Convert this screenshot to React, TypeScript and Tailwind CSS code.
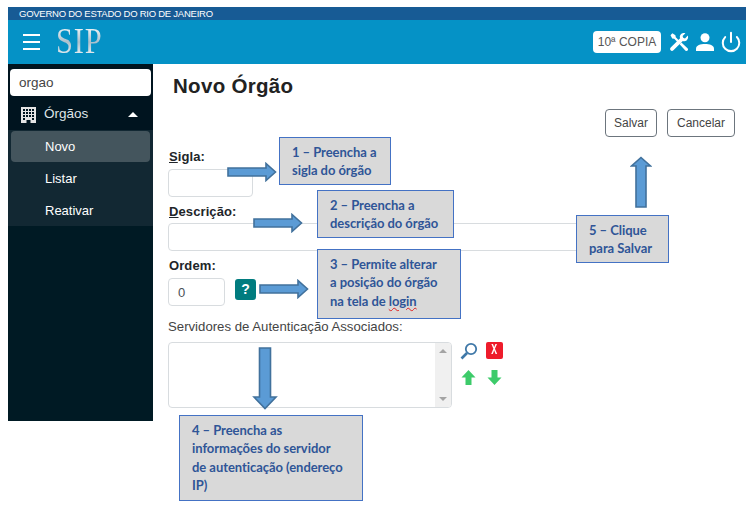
import React from "react";
import { Power } from "lucide-react";

const Note = ({ className, children }: { className: string; children: React.ReactNode }) => (
  <div className={`absolute bg-[#d9d9d9] border border-[#4472c4] text-[#2f5597] font-bold text-[13px] leading-[18.3px] tracking-[-0.05px] font-['Lato',sans-serif] ${className}`}>
    {children}
  </div>
);

const ArrowRight = ({ className }: { className: string }) => (
  <svg className={`absolute ${className}`} width="50" height="20" viewBox="0 0 50 20">
    <path d="M1 6H39V1.5L48.5 10L39 18.5V14H1Z" fill="#5b9bd5" stroke="#41719c" strokeWidth="1.6" />
  </svg>
);

const Field = ({ className }: { className: string }) => (
  <div className={`border border-[#d8dcdf] rounded bg-white ${className}`} />
);

export default function App() {
  return (
    <div className="relative w-[753px] h-[513px] overflow-hidden bg-white pl-2 pt-[7px] font-['Liberation_Sans',Arial,sans-serif]">
      <div className="w-[738px]">
        <div className="h-[13px] bg-[#175b95] pl-[11px] text-[9.5px] leading-[13px] text-white tracking-[-0.25px]">GOVERNO DO ESTADO DO RIO DE JANEIRO</div>
        <div className="h-[44px] bg-[#0592c6] flex items-center pl-[15px] pr-[4px]">
          <div className="flex flex-col gap-[5px] w-[17px]">
            <div className="h-[2px] bg-white" />
            <div className="h-[2px] bg-white" />
            <div className="h-[2px] bg-white" />
          </div>
          <div className="ml-[16px] h-[34px] text-[35px] leading-[34px] font-['Liberation_Serif',serif] tracking-[1px] bg-gradient-to-b from-[#ffffff] via-[#a9bfcb] to-[#ffffff] bg-clip-text text-transparent scale-x-[0.87] origin-left">SIP</div>
          <div className="ml-auto h-[22px] w-[68px] rounded bg-white text-[#555] text-[12px] flex items-center justify-center">10ª COPIA</div>
          <svg className="ml-[8px]" width="20" height="20" viewBox="0 0 20 20" fill="white">
            <path d="M1.5 3.2L3.4 1.3L6.4 3.2L6.8 5.2L11 9.4L9.4 11L5.2 6.8L3.2 6.4Z" />
            <path d="M10.6 12.2L12.4 10.4L18.5 16.3C19.2 17 19.2 18 18.6 18.6C18 19.2 17 19.2 16.3 18.5Z" />
            <path d="M18.8 3.6C19.5 5.4 19 7.3 17.6 8.4C16.4 9.3 15 9.4 13.8 8.9L4.4 18.3C3.6 19.1 2.4 19.1 1.6 18.3C0.9 17.5 0.9 16.4 1.7 15.6L11.1 6.2C10.6 5 10.7 3.5 11.7 2.4C12.8 1 14.7 0.5 16.4 1.2L13.6 4L14.2 5.8L16 6.4Z" />
          </svg>
          <svg className="ml-[7px]" width="18" height="18" viewBox="0 0 18 18" fill="white">
            <circle cx="9" cy="4.8" r="4.5" />
            <path d="M0 18V15.5C0 12.4 4.5 11 9 11C13.5 11 18 12.4 18 15.5V18Z" />
          </svg>
          <Power className="ml-[6px] text-white" size={22} strokeWidth={2.2} />
        </div>
      </div>

      <div className="flex w-[738px]">
        <aside className="w-[145px] h-[357px] shrink-0 bg-[#001a24] text-white text-[13px]">
          <div className="bg-[#00141f] pt-[5px] px-[2px] h-[66px]">
            <div className="h-[27px] rounded bg-white text-[#444] pl-[9px] leading-[27px] text-[13.5px]">orgao</div>
            <div className="flex items-center h-[36px] pt-px pl-[11px] pr-[13px] text-[#dfe5e8] text-[13.5px]">
              <svg width="15" height="16" viewBox="0 0 15 16" fill="#e4e4e4">
                <path fillRule="evenodd" d="M0 0H15V16H9.5V13H5.5V16H0ZM2 2V4H4V2ZM5 2V4H7V2ZM8 2V4H10V2ZM11 2V4H13V2ZM2 5V7H4V5ZM5 5V7H7V5ZM8 5V7H10V5ZM11 5V7H13V5ZM2 8V10H4V8ZM5 8V10H7V8ZM8 8V10H10V8ZM11 8V10H13V8ZM2 11V13H4V11ZM11 11V13H13V11Z" />
              </svg>
              <span className="ml-[8px]">Órgãos</span>
              <span className="ml-auto w-0 h-0 border-x-[5px] border-x-transparent border-b-[5px] border-b-white" />
            </div>
          </div>
          <div className="bg-[#122833] h-[96px] pt-px px-[3px] font-normal">
            <div className="h-[31px] rounded bg-[#44555d] pl-[34px] leading-[31px]">Novo</div>
            <div className="h-[32px] pl-[34px] leading-[33px]">Listar</div>
            <div className="h-[32px] pl-[34px] leading-[33px]">Reativar</div>
          </div>
        </aside>

        <main className="flex-1 pl-[15px] text-[#212529]">
          <h1 className="ml-[5px] mt-[9px] text-[20.5px] leading-[26px] font-bold tracking-[0.3px] text-[#222]">Novo Órgão</h1>
          <div className="flex justify-end gap-[10px] pr-[11px] mt-[10px] h-[28px] text-[12px] text-[#444]">
            <div className="w-[52px] border border-[#6c757d] rounded flex items-center justify-center">Salvar</div>
            <div className="w-[68px] border border-[#6c757d] rounded flex items-center justify-center">Cancelar</div>
          </div>
          <label className="block mt-[12px] ml-px h-[20px] text-[13px] leading-[16px] font-bold tracking-[0.1px]"><u>S</u>igla:</label>
          <Field className="w-[85px] h-[28px]" />
          <label className="block mt-[7px] ml-px h-[19px] text-[13px] leading-[16px] font-bold tracking-[0.1px]"><u>D</u>escrição:</label>
          <Field className="w-[450px] h-[28px]" />
          <label className="block mt-[7px] ml-px h-[20px] text-[13px] leading-[16px] font-bold tracking-[0.1px]">Ordem:</label>
          <div className="flex items-start">
            <div className="w-[57px] h-[28px] border border-[#d8dcdf] rounded pl-[9px] text-[13px] leading-[28px] text-[#495057]">0</div>
            <div className="ml-[10px] mt-[1px] w-[21px] h-[21px] rounded-[3px] bg-[#017c7f] text-white font-bold text-[14px] leading-[20px] text-center">?</div>
          </div>
          <div className="mt-[13px] h-[23px] text-[13.2px] leading-[16px] text-[#444]">Servidores de Autenticação Associados:</div>
          <div className="flex items-start">
            <div className="w-[284px] h-[66px] border border-[#d8dcdf] rounded flex justify-end overflow-hidden">
              <div className="w-[16px] bg-[#f0f0f0] flex flex-col items-center justify-between py-[6px]">
                <span className="w-0 h-0 border-x-[4px] border-x-transparent border-b-[4px] border-b-[#a3a3a3]" />
                <span className="w-0 h-0 border-x-[4px] border-x-transparent border-t-[4px] border-t-[#a3a3a3]" />
              </div>
            </div>
            <div className="ml-[8px] w-[44px] grid grid-cols-2 gap-x-[8px] gap-y-[9px]">
              <svg width="18" height="18" viewBox="0 0 18 18" fill="none" stroke="#3f78a8">
                <circle cx="11" cy="7" r="5.2" strokeWidth="1.8" />
                <path d="M7 11L1.5 16.5" strokeWidth="2.6" />
              </svg>
              <div className="w-[17px] h-[17px] rounded-[2px] bg-[#ee1c2b] text-white text-[14px] font-bold leading-[17px] text-center font-['Liberation_Mono',monospace]"><span className="inline-block scale-x-[0.7]">X</span></div>
              <svg width="17" height="17" viewBox="0 0 17 17"><path d="M8.5 1L15.5 8.5H11.5V16H5.5V8.5H1.5Z" fill="#3dcb6a" /></svg>
              <svg width="17" height="17" viewBox="0 0 17 17"><path d="M8.5 16L15.5 8.5H11.5V1H5.5V8.5H1.5Z" fill="#3dcb6a" /></svg>
            </div>
          </div>
        </main>
      </div>

      <ArrowRight className="left-[227px] top-[162px]" />
      <ArrowRight className="left-[253px] top-[213px]" />
      <ArrowRight className="left-[259px] top-[279px]" />
      <svg className="absolute left-[252px] top-[347px]" width="26" height="63" viewBox="0 0 26 63">
        <path d="M7.5 1H18.5V50H24L13 61.5L2 50H7.5Z" fill="#5b9bd5" stroke="#41719c" strokeWidth="1.6" />
      </svg>
      <svg className="absolute left-[630px] top-[156px]" width="22" height="52" viewBox="0 0 22 52">
        <path d="M11 1.5L20.5 10H16V51H6V10H1.5Z" fill="#5b9bd5" stroke="#41719c" strokeWidth="1.6" />
      </svg>

      <Note className="left-[279px] top-[137px] w-[112px] h-[48px] pl-[12px] pt-[5px]">1 – Preencha a<br />sigla do órgão</Note>
      <Note className="left-[317px] top-[190px] w-[137px] h-[48px] pl-[12px] pt-[5px]">2 – Preencha a<br />descrição do órgão</Note>
      <Note className="left-[317px] top-[249px] w-[144px] h-[70px] pl-[12px] pt-[5px]">3 – Permite alterar<br />a posição do órgão<br />na tela de <span className="underline decoration-wavy decoration-[#e02020] decoration-1">login</span></Note>
      <Note className="left-[179px] top-[415px] w-[184px] h-[86px] pl-[12px] pt-[5px]">4 – Preencha as<br />informações do servidor<br />de autenticação (endereço<br />IP)</Note>
      <Note className="left-[576px] top-[215px] w-[93px] h-[48px] pl-[12px] pt-[5px]">5 – Clique<br />para Salvar</Note>
    </div>
  );
}
